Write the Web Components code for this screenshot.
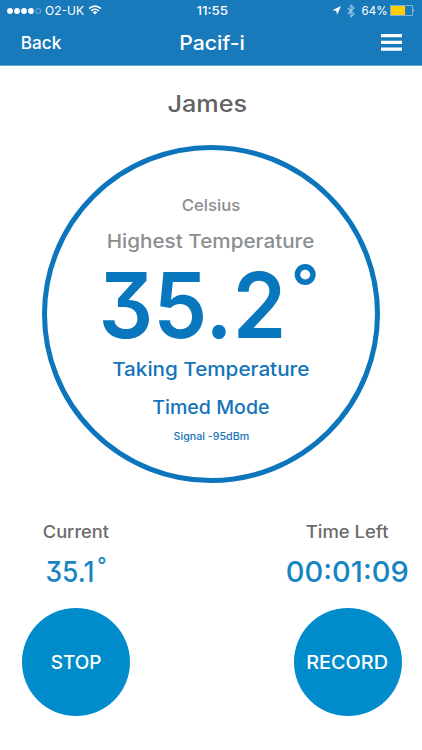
<!DOCTYPE html>
<html lang="en">
<head>
<meta charset="utf-8">
<meta name="viewport" content="width=device-width, initial-scale=1">
<title>Pacif-i</title>
<style>
    body {
        margin: 0;
        background: #fff;
        font-family: Inter, Roboto, sans-serif;
        font-weight: 500;
    }
</style>
</head>
<body>
<pacifi-screen></pacifi-screen>

<script>
window.customElements.define('wide-text', class extends HTMLElement {
    constructor() {
        super();

        this.attachShadow({ mode: 'open' });
        this.shadowRoot.innerHTML = `
            <style>
                :host {
                    display: flex;
                    justify-content: center;
                    flex: none;
                    white-space: nowrap;
                }
                span {
                    flex: none;
                    font-feature-settings: "cv09";
                }
            </style>
            <span><slot></slot></span>
        `;
    }

    connectedCallback() {
        const width = Number(this.getAttribute('width'));
        const span = this.shadowRoot.querySelector('span');
        // side bearings of the first and last glyph
        const bearing = parseFloat(getComputedStyle(this).fontSize) * 0.08;
        this.style.width = `${width}px`;
        span.style.transform = `scaleX(${width / (span.offsetWidth - bearing)})`;
    }
});

window.customElements.define('status-bar', class extends HTMLElement {
    constructor() {
        super();

        this.attachShadow({ mode: 'open' });
        this.shadowRoot.innerHTML = `
            <style>
                :host {
                    display: grid;
                    grid-template-columns: 1fr auto 1fr;
                    align-items: center;
                    height: 21px;
                    padding: 0 7px;
                    font-size: 12px;
                    font-weight: 400;
                }
                div {
                    display: flex;
                    align-items: center;
                }
                .right { justify-content: flex-end; }
                .time { font-weight: 500; padding-left: 3px; }
                svg { display: block; flex: none; }
            </style>
            <div>
                <svg width="35" height="8" fill="#fff">
                    <circle cx="3" cy="4" r="2.9"/>
                    <circle cx="10" cy="4" r="2.9"/>
                    <circle cx="17" cy="4" r="2.9"/>
                    <circle cx="24" cy="4" r="2.9"/>
                    <circle cx="31.3" cy="4" r="2.5" fill="none" stroke="#a9cfe8" stroke-width=".6"/>
                </svg>
                <wide-text width="38" style="margin-left: 3px">O2-UK</wide-text>
                <svg width="14" height="11" viewBox="0 0 14 11" fill="none" stroke="#fff" stroke-width="1.5" style="margin-left: 5px">
                    <path d="M1 3.6Q7-1.4 13 3.6M3.2 5.9Q7 2.7 10.8 5.9"/>
                    <path d="M7 9.6L4.6 7.2Q7 5.4 9.4 7.2Z" fill="#fff" stroke="none"/>
                </svg>
            </div>
            <wide-text class="time" width="30">11:55</wide-text>
            <div class="right">
                <svg width="9" height="9" viewBox="0 0 9 9" fill="#fff">
                    <path d="M9 0L5 8.8L4.3 4.7L.2 4.2Z"/>
                </svg>
                <svg width="8" height="14" viewBox="0 0 8 14" fill="none" stroke="#9ccbea" stroke-width="1.1" style="margin-left: 6px">
                    <path d="M.8 4L7 10L4 12.8V1.2L7 4L.8 10"/>
                </svg>
                <wide-text width="25" style="margin-left: 7px">64%</wide-text>
                <svg width="25" height="11" viewBox="0 0 25 11" style="margin-left: 3px">
                    <rect x=".5" y=".5" width="22" height="10" fill="none" stroke="#8fc0e2" stroke-width=".8"/>
                    <rect x="1" y="1" width="14" height="9" fill="#fc0"/>
                    <path d="M23.5 3.8Q25 5.5 23.5 7.2Z" fill="#fff"/>
                </svg>
            </div>
        `;
    }
});

window.customElements.define('nav-header', class extends HTMLElement {
    constructor() {
        super();

        this.attachShadow({ mode: 'open' });
        this.shadowRoot.innerHTML = `
            <style>
                :host {
                    display: block;
                    box-sizing: border-box;
                    height: 66px;
                    color: #fff;
                    background: #187abb;
                    border-bottom: 1px solid #65a7d2;
                }
                nav {
                    display: grid;
                    grid-template-columns: 1fr auto 1fr;
                    align-items: center;
                    height: 43px;
                    padding: 0 20px 0 22px;
                }
                .back { font-size: 17px; }
                .title { font-size: 20px; }
                svg { display: block; justify-self: end; }
            </style>
            <status-bar></status-bar>
            <nav>
                <wide-text class="back" width="39">Back</wide-text>
                <wide-text class="title" width="64"><slot></slot></wide-text>
                <svg width="21" height="18" fill="#fff">
                    <path d="M0 0H21V3.3H0ZM0 6.8H21V10.1H0ZM0 13.5H21V16.8H0Z"/>
                </svg>
            </nav>
        `;
    }
});

window.customElements.define('temperature-dial', class extends HTMLElement {
    constructor() {
        super();

        this.attachShadow({ mode: 'open' });
        this.shadowRoot.innerHTML = `
            <style>
                :host {
                    display: flex;
                    flex-direction: column;
                    align-items: center;
                    box-sizing: border-box;
                    width: 338px;
                    height: 338px;
                    margin: 3px auto 0;
                    padding-top: 43px;
                    border: 5px solid #0c75bb;
                    border-radius: 50%;
                    color: #1474b9;
                    font-size: 19px;
                    line-height: 49px;
                }
                .grey { color: #8c8e90; }
                .unit { font-size: 16px; line-height: 24px; }
                .value {
                    display: flex;
                    height: 79px;
                    color: #0877be;
                    font-size: 91px;
                    font-weight: 600;
                    line-height: 79px;
                    margin-right: 4px;
                }
                .degree {
                    font-size: 62px;
                    line-height: 41px;
                    margin-left: 11px;
                }
                .mode { line-height: 28px; }
                .signal { font-size: 10px; line-height: 29px; }
            </style>
            <wide-text class="grey unit" width="57">Celsius</wide-text>
            <wide-text class="grey" width="206">Highest Temperature</wide-text>
            <div class="value">
                <wide-text width="181"><slot></slot></wide-text>
                <wide-text class="degree" width="23">°</wide-text>
            </div>
            <wide-text width="195">Taking Temperature</wide-text>
            <wide-text class="mode" width="116">Timed Mode</wide-text>
            <wide-text class="signal" width="75">Signal -95dBm</wide-text>
        `;
    }
});

window.customElements.define('reading-panel', class extends HTMLElement {
    constructor() {
        super();

        this.attachShadow({ mode: 'open' });
        this.shadowRoot.innerHTML = `
            <style>
                :host {
                    display: flex;
                    flex-direction: column;
                    align-items: center;
                    width: 108px;
                }
                .label {
                    color: #6a6a6b;
                    font-size: 17px;
                    line-height: 32px;
                }
                .reading {
                    display: flex;
                    height: 49px;
                    color: #1785c1;
                    font-size: 28px;
                    line-height: 49px;
                }
                button {
                    display: flex;
                    align-items: center;
                    justify-content: center;
                    width: 108px;
                    height: 108px;
                    margin: 11px 0 0;
                    padding: 0;
                    border: 0;
                    border-radius: 50%;
                    background: #008ccb;
                    color: #fff;
                    font: inherit;
                    font-size: 18px;
                }
            </style>
            <div class="label"><slot name="label"></slot></div>
            <div class="reading"><slot name="reading"></slot></div>
            <button><slot></slot></button>
        `;
    }
});

window.customElements.define('pacifi-screen', class extends HTMLElement {
    constructor() {
        super();

        this.attachShadow({ mode: 'open' });
        this.shadowRoot.innerHTML = `
            <style>
                :host {
                    display: block;
                    width: 422px;
                    height: 750px;
                    overflow: hidden;
                }
                .name {
                    color: #626264;
                    font-size: 23px;
                    line-height: 77px;
                    height: 76px;
                    margin: 0 auto;
                    position: relative;
                    left: -4px;
                }
                footer {
                    display: flex;
                    justify-content: space-between;
                    margin-top: 33px;
                    padding: 0 20.5px 0 22px;
                }
                .degree {
                    font-size: 21px;
                    line-height: 36px;
                    margin-left: 4px;
                }
            </style>
            <nav-header>Pacif-i</nav-header>
            <wide-text class="name" width="78">James</wide-text>
            <temperature-dial>35.2</temperature-dial>
            <footer>
                <reading-panel>
                    <wide-text slot="label" width="65">Current</wide-text>
                    <wide-text slot="reading" width="47">35.1</wide-text>
                    <wide-text slot="reading" class="degree" width="8">°</wide-text>
                    <wide-text width="49">STOP</wide-text>
                </reading-panel>
                <reading-panel>
                    <wide-text slot="label" width="81">Time Left</wide-text>
                    <wide-text slot="reading" width="121">00:01:09</wide-text>
                    <wide-text width="80">RECORD</wide-text>
                </reading-panel>
            </footer>
        `;
    }
});
</script>
</body>
</html>
